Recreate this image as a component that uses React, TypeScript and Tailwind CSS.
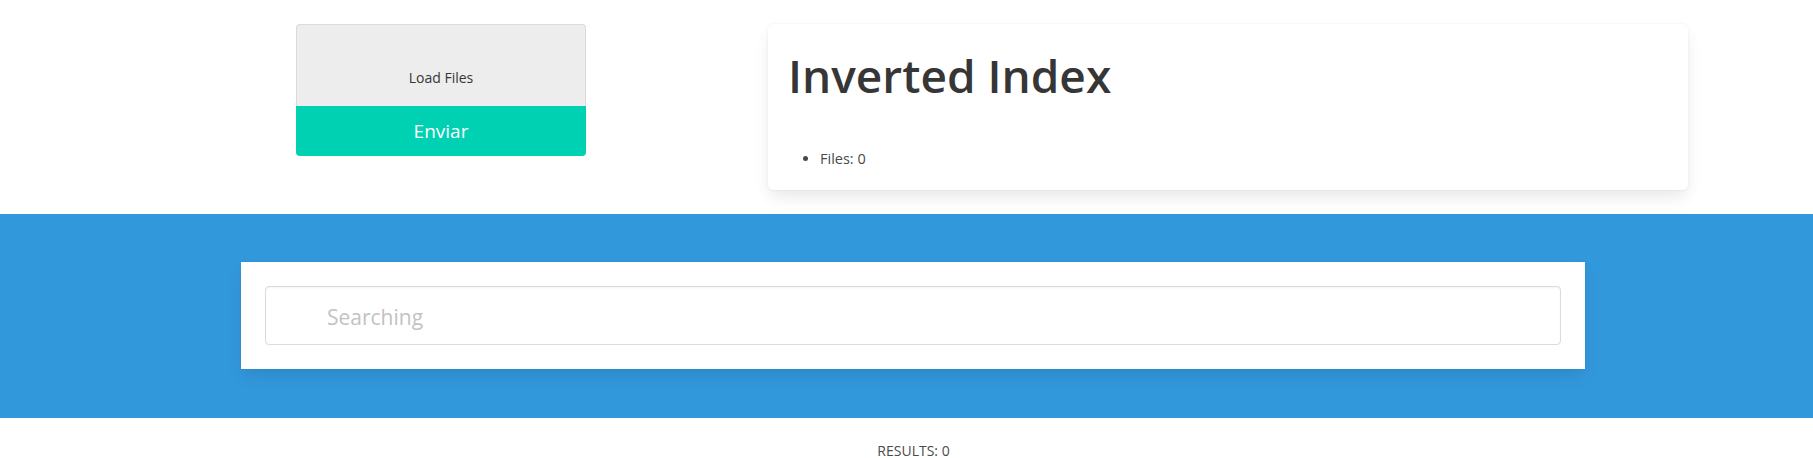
export default function App() {
  return (
    <div className="min-h-[458px] bg-white font-['Open_Sans','Noto_Sans',sans-serif] text-[#4a4a4a]">
      {/* top: loader + summary */}
      <section className="flex h-[214px] pt-[24px]">
        <div className="ml-[296px] flex w-[290px] flex-col self-start">
          <div className="flex h-[82px] items-end justify-center rounded-t-[4px] border border-b-0 border-[#dbdbdb] bg-[#ededed] pb-[18px] text-[14px] leading-[21px] text-[#363636]">
            Load Files
          </div>
          <button className="h-[50px] rounded-b-[4px] bg-[#00d1b2] text-[19px] text-white">
            Enviar
          </button>
        </div>
        <div className="ml-[182px] h-[166px] w-[920px] rounded-[6px] bg-white px-5 pt-[24px] shadow-[0_8px_16px_-2px_rgba(10,10,10,0.1),0_0_0_1px_rgba(10,10,10,0.02)]">
          <h1 className="text-[46px] leading-[54px] font-semibold text-[#363636]">
            Inverted Index
          </h1>
          <ul className="mt-[46px] list-disc pl-[32px] text-[14.5px] leading-[21px]">
            <li>Files: 0</li>
          </ul>
        </div>
      </section>

      {/* search band */}
      <section className="h-[204px] bg-[#3298dc] pt-[48px]">
        <div className="ml-[241px] w-[1344px] bg-white p-6 shadow-[0_8px_16px_-2px_rgba(10,10,10,0.1),0_0_0_1px_rgba(10,10,10,0.02)]">
          <input
            type="text"
            placeholder="Searching"
            className="h-[59px] w-full rounded-[4px] border border-[#dbdbdb] bg-white pl-[61px] pt-[3px] text-[21px] text-[#363636] shadow-[inset_0_1px_2px_rgba(10,10,10,0.05)] outline-none placeholder:text-[#c2c2c2]"
          />
        </div>
      </section>

      <div className="pl-[14px] pt-[22px] text-center text-[14px] leading-[21px]">
        RESULTS: 0
      </div>
    </div>
  );
}
